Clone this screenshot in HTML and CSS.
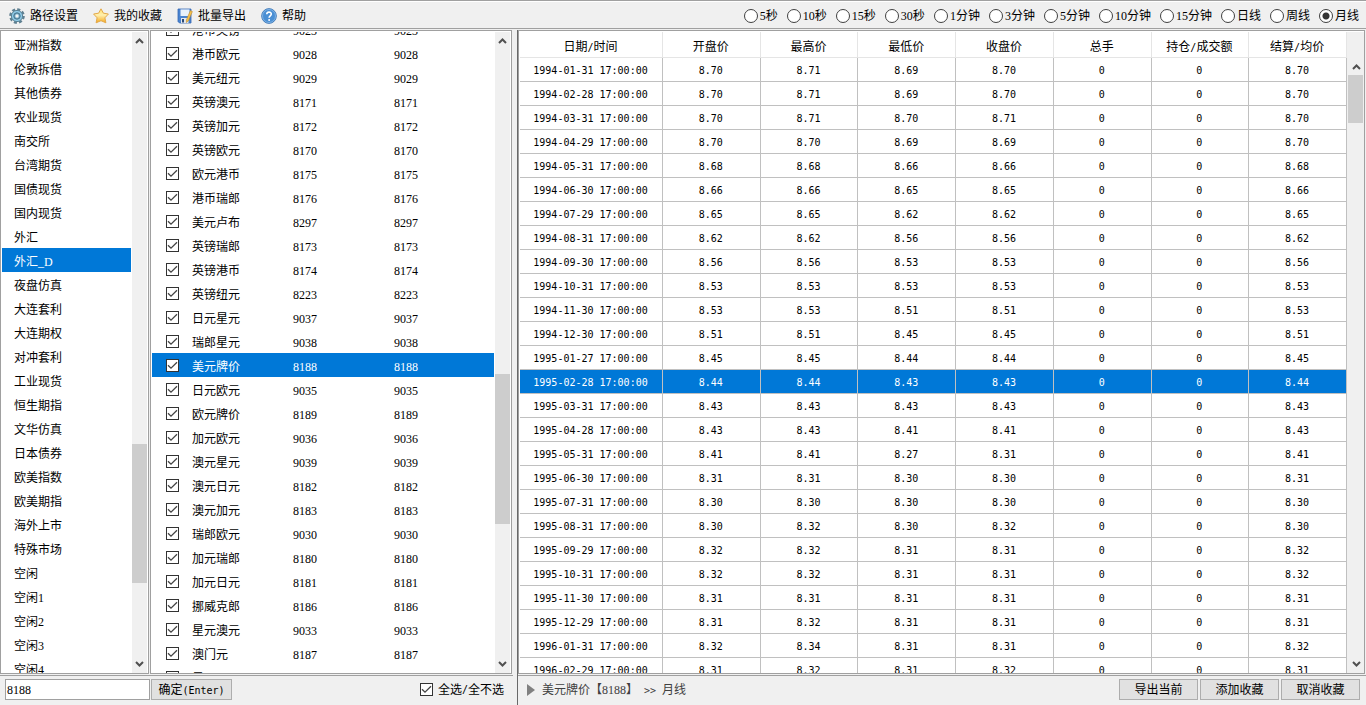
FILE: index.html
```html
<!DOCTYPE html>
<html lang="zh-CN">
<head>
<meta charset="utf-8">
<title>批量导出</title>
<link rel="stylesheet" href="styles.css">
</head>
<body>
<header class="toolbar">
  <nav class="actions">
    <button class="tool" type="button">
      <svg class="tool-icon" viewBox="0 0 16 16" aria-hidden="true">
        <circle cx="8" cy="8" r="6.6" fill="none" stroke="#5f7f90" stroke-width="2.4" stroke-dasharray="3.1 2.083"/>
        <circle cx="8" cy="8" r="5.6" fill="#8fcbe8" stroke="#5a8296" stroke-width="1"/>
        <circle cx="8" cy="8" r="3.2" fill="#6fa8c6" stroke="#49748a" stroke-width="1"/>
        <circle cx="8" cy="8" r="1.7" fill="#f4f4f4"/>
      </svg>路径设置</button>
    <button class="tool" type="button">
      <svg class="tool-icon" viewBox="0 0 16 16" aria-hidden="true">
        <defs><linearGradient id="gold" x1="0" y1="0" x2="0" y2="1"><stop offset="0" stop-color="#ffdf6a"/><stop offset=".45" stop-color="#fff0b0"/><stop offset="1" stop-color="#f6a81c"/></linearGradient></defs>
        <path d="M8 .8 10.4 5.2 15.4 6 11.9 9.8 12.9 14.8 8 12.7 3.1 14.8 4.1 9.8 .6 6 5.6 5.2Z" fill="url(#gold)" stroke="#e3a94a" stroke-linejoin="round"/>
      </svg>我的收藏</button>
    <button class="tool" type="button">
      <svg class="tool-icon" viewBox="0 0 16 16" aria-hidden="true">
        <path d="M1 1H14V15H2.5L1 13.5Z" fill="#4a84d0" stroke="#3568b4" stroke-width=".8"/>
        <path d="M3.5 1.4H12.5V8H3.5Z" fill="#e8f1fa"/>
        <path d="M4 10H11.5V15H4Z" fill="#e4e8ee"/>
        <path d="M5 11H7V14.6H5Z" fill="#2b4a78"/>
        <path d="M13.4 2.6 15.4 3.6 11.4 12.8 9.4 14.6 9.4 11.8Z" fill="#f4c04a" stroke="#b98022" stroke-width=".5"/>
      </svg>批量导出</button>
    <button class="tool" type="button">
      <svg class="tool-icon" viewBox="0 0 16 16" aria-hidden="true">
        <circle cx="8" cy="8" r="7.4" fill="#4a8fd4" stroke="#3d76b4" stroke-width=".8"/>
        <circle cx="8" cy="8" r="6.5" fill="none" stroke="#8dbbe8" stroke-width=".8"/>
        <path d="M5.8 6.3C5.8 3.4 10.3 3.5 10.3 6.1 10.3 7.8 8.1 7.8 8.1 9.7" fill="none" stroke="#fff" stroke-width="1.6"/>
        <circle cx="8.1" cy="11.9" r="1" fill="#fff"/>
      </svg>帮助</button>
  </nav>
  <div class="periods" id="periods" role="radiogroup" aria-label="周期"></div>
</header>

<main class="main">
  <section class="side">
    <div class="lists">
      <div class="panel markets">
        <ul class="list" id="markets"></ul>
        <div class="scrollbar">
          <svg class="arrow" viewBox="0 0 9 6" aria-hidden="true"><path d="M1 5 4.5 1.5 8 5"/></svg>
          <div class="track"><div class="before-markets"></div><div class="thumb thumb-markets"></div></div>
          <svg class="arrow" viewBox="0 0 9 6" aria-hidden="true"><path d="M1 1 4.5 4.5 8 1"/></svg>
        </div>
      </div>
      <div class="panel symbols">
        <ul class="list" id="symbols"></ul>
        <div class="scrollbar">
          <svg class="arrow" viewBox="0 0 9 6" aria-hidden="true"><path d="M1 5 4.5 1.5 8 5"/></svg>
          <div class="track"><div class="before-symbols"></div><div class="thumb thumb-symbols"></div></div>
          <svg class="arrow" viewBox="0 0 9 6" aria-hidden="true"><path d="M1 1 4.5 4.5 8 1"/></svg>
        </div>
      </div>
    </div>
    <form class="footer">
      <input class="search" type="text" value="8188" aria-label="代码">
      <button class="btn enter" type="button">确定<span class="mono">(Enter)</span></button>
      <label class="all"><input class="check" type="checkbox" checked>全选<span class="mono">/</span>全不选</label>
    </form>
  </section>

  <section class="data">
    <div class="panel quotes">
      <div class="table-wrap">
        <table class="table">
          <colgroup><col class="col-date"><col><col><col><col><col><col><col></colgroup>
          <thead>
            <tr><th>日期<span class="mono">/</span>时间</th><th>开盘价</th><th>最高价</th><th>最低价</th><th>收盘价</th><th>总手</th><th>持仓<span class="mono">/</span>成交额</th><th>结算<span class="mono">/</span>均价</th></tr>
          </thead>
          <tbody id="quotes"></tbody>
        </table>
      </div>
      <div class="scrollbar quotes-scroll">
        <svg class="arrow" viewBox="0 0 9 6" aria-hidden="true"><path d="M1 5 4.5 1.5 8 5"/></svg>
        <div class="track"><div class="thumb thumb-quotes"></div></div>
        <svg class="arrow" viewBox="0 0 9 6" aria-hidden="true"><path d="M1 1 4.5 4.5 8 1"/></svg>
      </div>
    </div>
    <div class="footer status">
      <svg class="play" viewBox="0 0 8 12" aria-hidden="true"><path d="M0 0 8 6 0 12Z" fill="#808080"/></svg>
      <span class="crumb">美元牌价【8188】<span class="mono"> &gt;&gt; </span>月线</span>
      <div class="buttons">
        <button class="btn" type="button">导出当前</button>
        <button class="btn" type="button">添加收藏</button>
        <button class="btn" type="button">取消收藏</button>
      </div>
    </div>
  </section>
</main>
<script src="app.js"></script>
</body>
</html>
```

FILE: styles.css
```css
* { box-sizing: border-box; }

body {
  margin: 0;
  height: 100vh;
  display: flex;
  flex-direction: column;
  overflow: hidden;
  background: #f0f0f0;
  color: #000;
  font: 12px/16px "Liberation Serif", "Noto Sans CJK SC", serif;
}

button, input { font: inherit; color: inherit; }

.mono {
  font-family: "DejaVu Sans Mono", monospace;
  font-size: 10px;
  white-space: pre;
}

/* toolbar */
.toolbar {
  flex: none;
  height: 29px;
  display: flex;
  justify-content: space-between;
  align-items: center;
  padding: 3px 7px 0 9px;
  border: 1px solid #a0a0a0;
  border-width: 1px 0;
  box-shadow: inset 0 1px #fff;
}

.actions { display: flex; gap: 15px; }

.tool {
  display: flex;
  align-items: center;
  gap: 5px;
  padding: 0;
  border: 0;
  background: none;
}

.tool-icon { width: 16px; height: 16px; }

.periods { display: flex; gap: 9px; }

.period { display: flex; align-items: center; gap: 2px; }

.radio {
  appearance: none;
  width: 14px;
  height: 14px;
  margin: 0;
  border: 1px solid #404040;
  border-radius: 50%;
  background: #fff;
}

.radio:checked { background: radial-gradient(circle, #333 3px, #fff 4px); }

/* main area */
.main {
  flex: 1;
  min-height: 0;
  display: flex;
  padding-top: 1px;
}

.side {
  flex: none;
  width: 517px;
  display: flex;
  flex-direction: column;
}

.lists {
  flex: 1;
  min-height: 0;
  display: flex;
  gap: 1px;
}

.panel {
  display: flex;
  min-height: 0;
  padding: 1px 1px 0;
  border: 1px solid #a0a0a0;
  background: #fff;
}

.markets { width: 149px; }
.symbols { width: 362px; }

.list {
  flex: 1;
  margin: 0 1px 0 0;
  padding: 0;
  overflow: hidden;
  list-style: none;
}

.market {
  height: 24px;
  padding: 6px 12px 2px;
}

.symbol {
  height: 24px;
  display: grid;
  grid-template-columns: 26px 101px 101px 1fr;
  align-items: center;
  padding: 1px 0 0 14px;
}

.symbol span { padding-top: 2px; }

.market.selected, .symbol.selected, .selected td {
  background: #0078d7;
  color: #fff;
}

.check {
  appearance: none;
  width: 13px;
  height: 13px;
  margin: 0;
  border: 1px solid #333;
  background: #fff;
}

.check:checked {
  background: #fff url("data:image/svg+xml,%3Csvg xmlns='http://www.w3.org/2000/svg' viewBox='0 0 11 11'%3E%3Cpath d='M1 5.2 4 8.2 10 2.2' fill='none' stroke='%23444' stroke-width='1.3'/%3E%3C/svg%3E");
}

/* scrollbars */
.scrollbar {
  flex: none;
  width: 15px;
  display: flex;
  flex-direction: column;
  align-items: center;
  padding: 6px 0;
  background: #f0f0f0;
}

.arrow {
  flex: none;
  width: 9px;
  height: 6px;
  fill: none;
  stroke: #505050;
  stroke-width: 2;
}

.track {
  flex: 1;
  width: 100%;
  display: flex;
  flex-direction: column;
  margin: 5px 0;
}

.thumb { background: #cdcdcd; }

.before-markets { flex: 0 0 65%; }
.thumb-markets { flex: 0 0 139px; }
.before-symbols { flex: 0 0 53.5%; }
.thumb-symbols { flex: 0 0 150px; }
.thumb-quotes { flex: 0 0 48px; }

/* quotes */
.data {
  flex: 1;
  min-width: 0;
  display: flex;
  flex-direction: column;
  border-left: 1px solid #696969;
}

.quotes { flex: 1; margin-right: 1px; padding-right: 0; }

.table-wrap {
  flex: 1;
  overflow: hidden;
}

.table {
  width: 100%;
  table-layout: fixed;
  border-collapse: separate;
  border-spacing: 0;
  text-align: center;
}

.col-date { width: 143px; }

.table th {
  height: 26px;
  padding: 5px 1px 0 0;
  border-right: 1px solid #e5e5e5;
  border-bottom: 1px solid #e5e5e5;
  font-weight: normal;
}

.table td {
  height: 24px;
  padding: 2px 1px 0 0;
  border-right: 1px solid #c0c0c0;
  border-bottom: 1px solid #c0c0c0;
  font: 10px/16px "DejaVu Sans Mono", monospace;
}

.quotes-scroll {
  width: 17px;
  padding: 32px 0 6px 1px;
}

.quotes-scroll .track { margin-right: 1px; width: 15px; }

/* bottom bars */
.footer {
  flex: none;
  height: 30px;
  display: flex;
  align-items: center;
  margin-top: 1px;
  padding: 0 13px 2px 5px;
  border-top: 1px solid #a0a0a0;
}

.side .footer { margin-right: 4px; padding-right: 9px; }

.search {
  width: 145px;
  height: 21px;
  padding: 1px 1px 0;
  border: 1px solid #a0a0a0;
  background: #fff;
}

.btn {
  width: 79px;
  height: 21px;
  padding: 1px 0 0;
  border: 1px solid #adadad;
  background: #e1e1e1;
  line-height: 16px;
}

.enter { width: 81px; margin-left: 1px; }

.all {
  display: flex;
  align-items: center;
  margin-left: auto;
}

.all .check { margin-right: 5px; }

.data .status { padding: 0 6px 2px 9px; }

.play { width: 8px; height: 12px; }

.crumb { margin-left: 7px; padding-top: 2px; color: #404040; }

.buttons {
  display: flex;
  gap: 2px;
  margin-left: auto;
}
```

FILE: app.js
```js
const periods = ["5秒", "10秒", "15秒", "30秒", "1分钟", "3分钟", "5分钟", "10分钟", "15分钟", "日线", "周线", "月线"];

const markets = ["亚洲指数", "伦敦拆借", "其他债券", "农业现货", "南交所", "台湾期货", "国债现货", "国内现货", "外汇", "外汇_D", "夜盘仿真", "大连套利", "大连期权", "对冲套利", "工业现货", "恒生期指", "文华仿真", "日本债券", "欧美指数", "欧美期指", "海外上市", "特殊市场", "空闲", "空闲1", "空闲2", "空闲3", "空闲4"];

const symbols = `港币英镑 9023
港币欧元 9028
美元纽元 9029
英镑澳元 8171
英镑加元 8172
英镑欧元 8170
欧元港币 8175
港币瑞郎 8176
美元卢布 8297
英镑瑞郎 8173
英镑港币 8174
英镑纽元 8223
日元星元 9037
瑞郎星元 9038
美元牌价 8188
日元欧元 9035
欧元牌价 8189
加元欧元 9036
澳元星元 9039
澳元日元 8182
澳元加元 8183
瑞郎欧元 9030
加元瑞郎 8180
加元日元 8181
挪威克郎 8186
星元澳元 9033
澳门元 8187
星元日元 9034`.split("\n").map(line => line.split(" "));

// date, open, high, low, close
const quotes = `1994-01-31 8.70 8.71 8.69 8.70
1994-02-28 8.70 8.71 8.69 8.70
1994-03-31 8.70 8.71 8.70 8.71
1994-04-29 8.70 8.70 8.69 8.69
1994-05-31 8.68 8.68 8.66 8.66
1994-06-30 8.66 8.66 8.65 8.65
1994-07-29 8.65 8.65 8.62 8.62
1994-08-31 8.62 8.62 8.56 8.56
1994-09-30 8.56 8.56 8.53 8.53
1994-10-31 8.53 8.53 8.53 8.53
1994-11-30 8.53 8.53 8.51 8.51
1994-12-30 8.51 8.51 8.45 8.45
1995-01-27 8.45 8.45 8.44 8.44
1995-02-28 8.44 8.44 8.43 8.43
1995-03-31 8.43 8.43 8.43 8.43
1995-04-28 8.43 8.43 8.41 8.41
1995-05-31 8.41 8.41 8.27 8.31
1995-06-30 8.31 8.31 8.30 8.30
1995-07-31 8.30 8.30 8.30 8.30
1995-08-31 8.30 8.32 8.30 8.32
1995-09-29 8.32 8.32 8.31 8.31
1995-10-31 8.32 8.32 8.31 8.31
1995-11-30 8.31 8.31 8.31 8.31
1995-12-29 8.31 8.32 8.31 8.31
1996-01-31 8.32 8.34 8.31 8.31
1996-02-29 8.31 8.32 8.31 8.32`.split("\n").map(line => line.split(" "));

const fill = (id, items) => { document.getElementById(id).innerHTML = items.join(""); };
const mark = on => on ? " selected" : "";

fill("periods", periods.map(p =>
  `<label class="period"><input class="radio" type="radio" name="period"${p === "月线" ? " checked" : ""}>${p}</label>`));

fill("markets", markets.map(m => `<li class="market${mark(m === "外汇_D")}">${m}</li>`));

fill("symbols", symbols.map(([name, code]) =>
  `<li class="symbol${mark(code === "8188")}"><input class="check" type="checkbox" checked aria-label="${name}"><span>${name}</span><span>${code}</span><span>${code}</span></li>`));

// the settlement column repeats the opening price
fill("quotes", quotes.map(([date, open, high, low, close]) =>
  `<tr class="quote${mark(date === "1995-02-28")}">` +
  [`${date} 17:00:00`, open, high, low, close, 0, 0, open].map(v => `<td>${v}</td>`).join("") + "</tr>"));

document.getElementById("symbols").scrollTop = 15;
```
